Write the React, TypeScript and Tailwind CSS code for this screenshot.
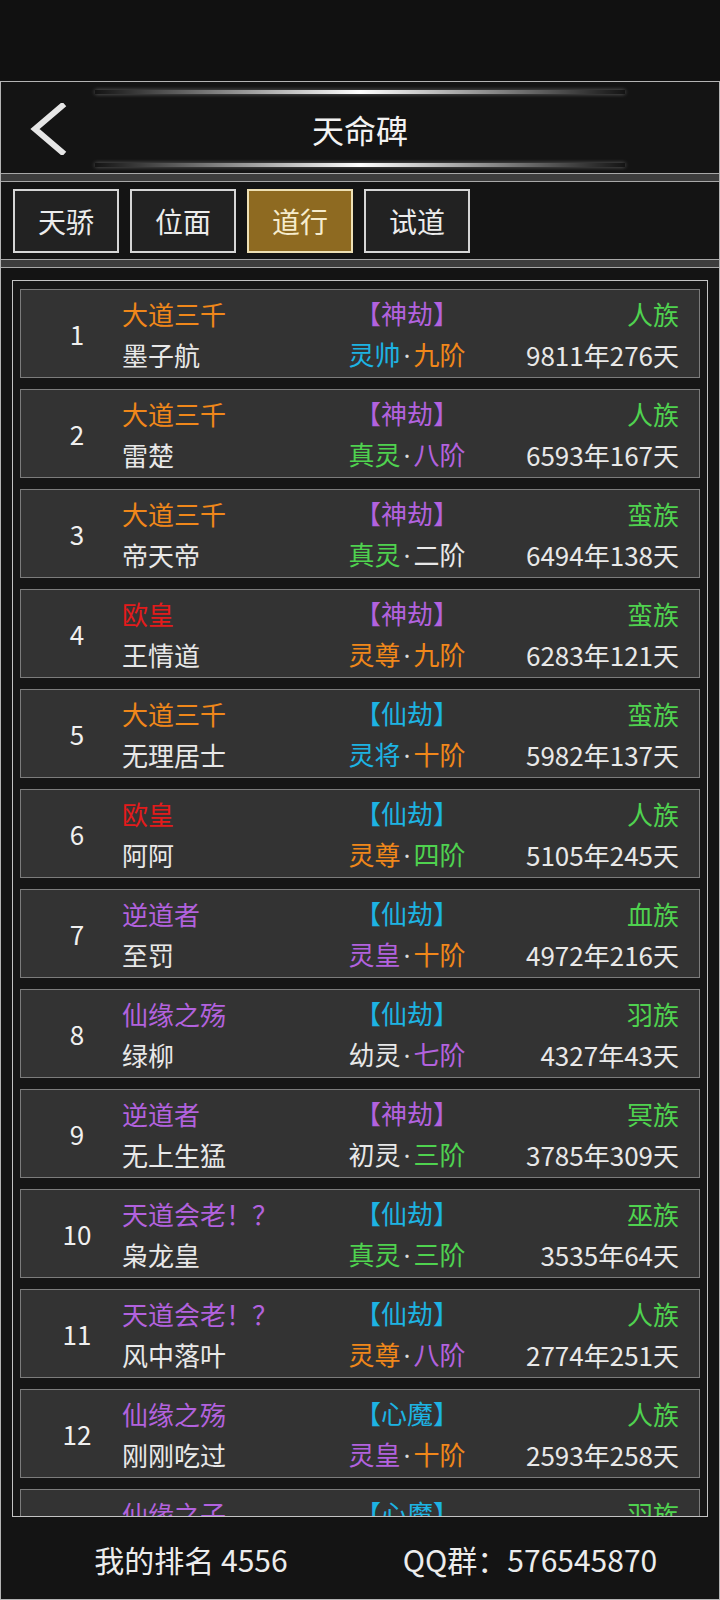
import React from "react";

const O = "text-[#f0871a]";
const R = "text-[#e31b1b]";
const P = "text-[#b262de]";
const G = "text-[#4fd24f]";
const C = "text-[#1db3e3]";
const W = "text-[#e8e8e8]";

type Seg = [string, string];

interface Row {
  rank: number;
  title: Seg;
  jie: Seg;
  race: string;
  name: string;
  realm: [Seg, Seg];
  age: string;
}

const rows: Row[] = [
  { rank: 1, title: ["大道三千", O], jie: ["【神劫】", P], race: "人族", name: "墨子航", realm: [["灵帅", C], ["九阶", O]], age: "9811年276天" },
  { rank: 2, title: ["大道三千", O], jie: ["【神劫】", P], race: "人族", name: "雷楚", realm: [["真灵", G], ["八阶", P]], age: "6593年167天" },
  { rank: 3, title: ["大道三千", O], jie: ["【神劫】", P], race: "蛮族", name: "帝天帝", realm: [["真灵", G], ["二阶", W]], age: "6494年138天" },
  { rank: 4, title: ["欧皇", R], jie: ["【神劫】", P], race: "蛮族", name: "王情道", realm: [["灵尊", O], ["九阶", O]], age: "6283年121天" },
  { rank: 5, title: ["大道三千", O], jie: ["【仙劫】", C], race: "蛮族", name: "无理居士", realm: [["灵将", C], ["十阶", O]], age: "5982年137天" },
  { rank: 6, title: ["欧皇", R], jie: ["【仙劫】", C], race: "人族", name: "阿阿", realm: [["灵尊", O], ["四阶", G]], age: "5105年245天" },
  { rank: 7, title: ["逆道者", P], jie: ["【仙劫】", C], race: "血族", name: "至罚", realm: [["灵皇", P], ["十阶", O]], age: "4972年216天" },
  { rank: 8, title: ["仙缘之殇", P], jie: ["【仙劫】", C], race: "羽族", name: "绿柳", realm: [["幼灵", W], ["七阶", P]], age: "4327年43天" },
  { rank: 9, title: ["逆道者", P], jie: ["【神劫】", P], race: "冥族", name: "无上生猛", realm: [["初灵", W], ["三阶", G]], age: "3785年309天" },
  { rank: 10, title: ["天道会老！？", P], jie: ["【仙劫】", C], race: "巫族", name: "枭龙皇", realm: [["真灵", G], ["三阶", G]], age: "3535年64天" },
  { rank: 11, title: ["天道会老！？", P], jie: ["【仙劫】", C], race: "人族", name: "风中落叶", realm: [["灵尊", O], ["八阶", P]], age: "2774年251天" },
  { rank: 12, title: ["仙缘之殇", P], jie: ["【心魔】", C], race: "人族", name: "刚刚吃过", realm: [["灵皇", P], ["十阶", O]], age: "2593年258天" },
  { rank: 13, title: ["仙缘之子", P], jie: ["【心魔】", C], race: "羽族", name: "清风", realm: [["灵皇", P], ["九阶", O]], age: "2401年112天" },
];

const tabs = ["天骄", "位面", "道行", "试道"];

function Separator() {
  return <div className="h-[9px] shrink-0 border-y-[1.5px] border-[#a8a8a8] bg-[#3d3d3d]" />;
}

function GlowLine() {
  return (
    <div className="mx-auto h-[4px] w-[530px] bg-linear-to-r from-transparent via-white to-transparent shadow-[0_0_4px_rgba(255,255,255,0.35)]" />
  );
}

function RankRow({ row }: { row: Row }) {
  return (
    <div className="mb-[11px] flex h-[89px] shrink-0 items-center border border-[#7c7c7c] bg-[#333333] text-[26px]">
      <div className="w-[101px] pl-[11px] text-center text-[#f0f0f0]">{row.rank}</div>
      <div className="flex w-[200px] flex-col leading-[41px]">
        <span className={row.title[1]}>{row.title[0]}</span>
        <span className={W}>{row.name}</span>
      </div>
      <div className="flex w-[170px] flex-col text-center leading-[41px]">
        <span className={row.jie[1]}>{row.jie[0]}</span>
        <span>
          <span className={row.realm[0][1]}>{row.realm[0][0]}</span>
          <span className="mx-[3px] font-['Noto_Sans',sans-serif] text-[#dcdcdc]">·</span>
          <span className={row.realm[1][1]}>{row.realm[1][0]}</span>
        </span>
      </div>
      <div className="flex flex-1 flex-col pr-[20px] text-right leading-[41px]">
        <span className={G}>{row.race}</span>
        <span className={W}>{row.age}</span>
      </div>
    </div>
  );
}

export default function App() {
  return (
    <div className="flex h-[1600px] w-[720px] flex-col overflow-hidden bg-[#111111] font-['Noto_Sans_CJK_SC','Noto_Sans',sans-serif]">
      <div className="h-[81px] shrink-0" />

      <div className="flex min-h-0 flex-1 flex-col border-[1.5px] border-[#b4b4b4] bg-[#141414]">
        {/* header */}
        <div className="flex h-[91px] shrink-0 flex-col pt-[8px] pb-[6px]">
          <GlowLine />
          <div className="flex flex-1 items-center">
            <div className="w-[110px] pl-[28px]">
              <svg width="38" height="52" viewBox="0 0 38 52" fill="none">
                <polyline points="33,3 6,26 33,49" stroke="#e6e6e6" strokeWidth="6" strokeLinecap="square" />
              </svg>
            </div>
            <div className="flex-1 text-center text-[32px] text-[#f2f2f2]">天命碑</div>
            <div className="w-[110px]" />
          </div>
          <GlowLine />
        </div>

        <Separator />

        {/* tabs */}
        <div className="flex h-[77px] shrink-0 items-center gap-[11px] px-[12px]">
          {tabs.map((t) => (
            <div
              key={t}
              className={
                t === "道行"
                  ? "flex h-[64px] w-[106px] items-center justify-center border-2 border-[#eee0b4] bg-[#8e6a21] text-[28px] text-[#f6eccd]"
                  : "flex h-[64px] w-[106px] items-center justify-center border-2 border-[#d6d6d6] bg-[#222222] text-[28px] text-[#ececec]"
              }
            >
              {t}
            </div>
          ))}
        </div>

        <Separator />

        {/* list */}
        <div className="min-h-0 flex-1 px-[11px] pt-[12px]">
          <div className="flex h-[1237px] flex-col overflow-hidden border-[1.5px] border-[#c4c4c4] bg-[#161616] px-[7px] pt-[8px]">
            {rows.map((r) => (
              <RankRow key={r.rank} row={r} />
            ))}
          </div>
        </div>

        {/* footer */}
        <div className="flex h-[79px] shrink-0 items-center text-[30px] text-[#ececec]">
          <div className="w-[380px] text-center">我的排名 4556</div>
          <div className="w-[298px] text-center">QQ群：576545870</div>
        </div>
      </div>
    </div>
  );
}
